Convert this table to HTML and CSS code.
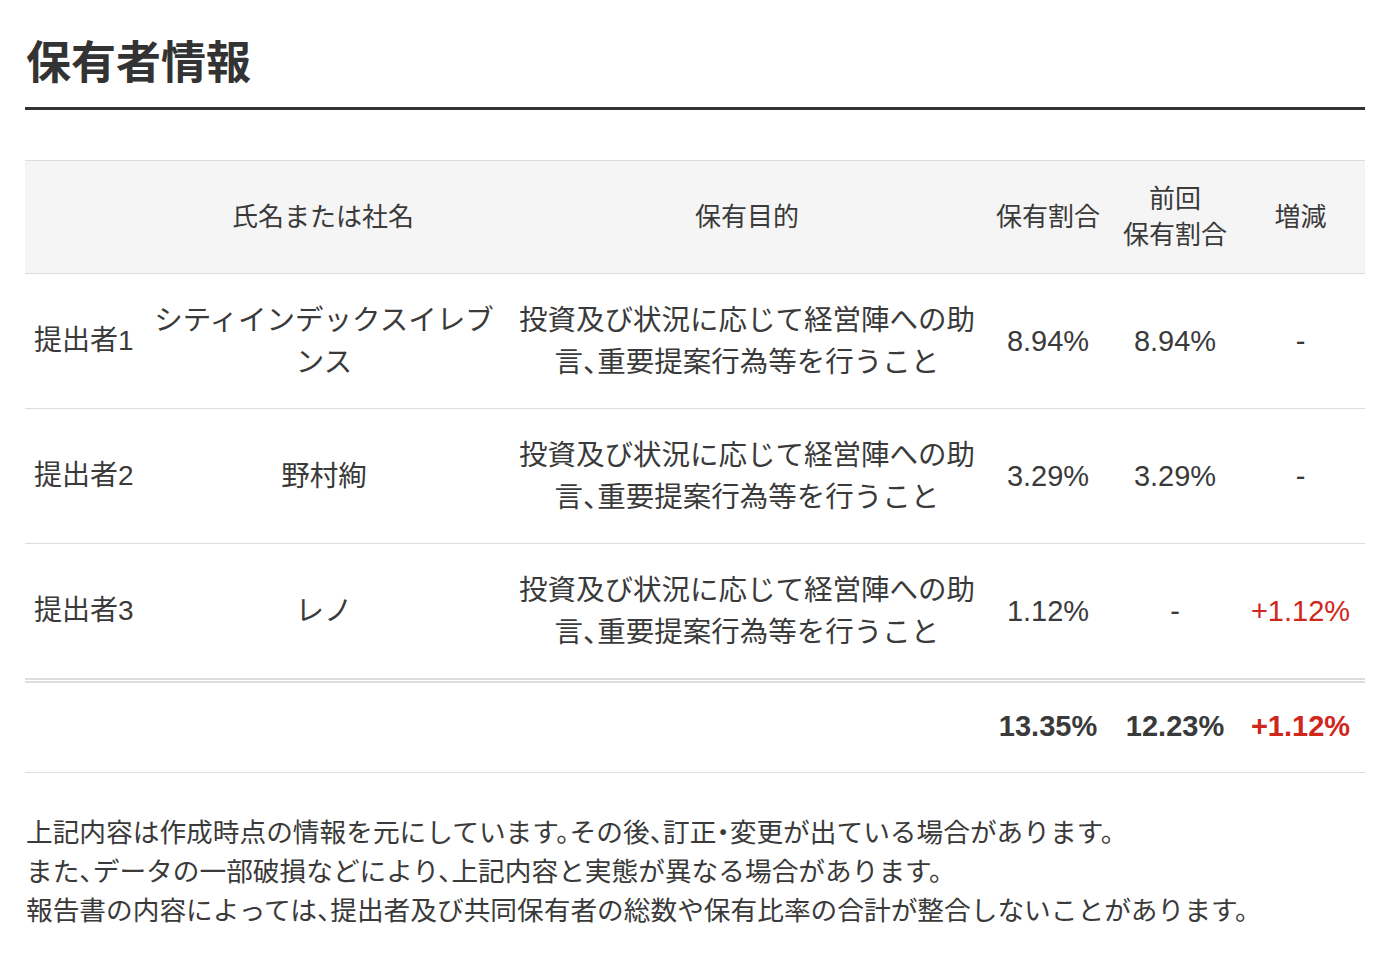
FILE: index.html
```html
<!DOCTYPE html>
<html lang="ja">
<head>
<meta charset="utf-8">
<title>保有者情報</title>
<link rel="stylesheet" href="styles.css">
</head>
<body>
<section class="holders">
  <h2 class="title">保有者情報</h2>
  <table class="table">
    <colgroup>
      <col class="c1"><col class="c2"><col class="c3"><col class="c4"><col class="c5"><col class="c6">
    </colgroup>
    <thead>
      <tr>
        <th></th>
        <th>氏名または社名</th>
        <th>保有目的</th>
        <th>保有割合</th>
        <th>前回<br>保有割合</th>
        <th>増減</th>
      </tr>
    </thead>
    <tbody>
      <tr>
        <td class="label">提出者1</td>
        <td class="name">シティインデックスイレブンス</td>
        <td class="purpose">投資及び状況に応じて経営陣への助言、重要提案行為等を行うこと</td>
        <td class="num">8.94%</td>
        <td class="num">8.94%</td>
        <td class="num">-</td>
      </tr>
      <tr>
        <td class="label">提出者2</td>
        <td class="name">野村絢</td>
        <td class="purpose">投資及び状況に応じて経営陣への助言、重要提案行為等を行うこと</td>
        <td class="num">3.29%</td>
        <td class="num">3.29%</td>
        <td class="num">-</td>
      </tr>
      <tr>
        <td class="label">提出者3</td>
        <td class="name">レノ</td>
        <td class="purpose">投資及び状況に応じて経営陣への助言、重要提案行為等を行うこと</td>
        <td class="num">1.12%</td>
        <td class="num">-</td>
        <td class="num up">+1.12%</td>
      </tr>
    </tbody>
    <tfoot>
      <tr>
        <td></td>
        <td></td>
        <td></td>
        <td class="num total">13.35%</td>
        <td class="num total">12.23%</td>
        <td class="num total up">+1.12%</td>
      </tr>
    </tfoot>
  </table>
  <div class="notes">
    <p>上記内容は作成時点の情報を元にしています。その後、訂正・変更が出ている場合があります。</p>
    <p>また、データの一部破損などにより、上記内容と実態が異なる場合があります。</p>
    <p>報告書の内容によっては、提出者及び共同保有者の総数や保有比率の合計が整合しないことがあります。</p>
  </div>
</section>
</body>
</html>
```

FILE: styles.css
```css
html, body {
  margin: 0;
  padding: 0;
  background: #fff;
}

body {
  font-family: "Liberation Sans", "Noto Sans CJK JP", sans-serif;
  font-feature-settings: "halt";
  color: #3a3a3a;
}

.holders {
  padding: 25px 28px 0 25px;
}

.title {
  margin: 0;
  font-family: "Noto Sans CJK JP", sans-serif;
  font-size: 45px;
  font-weight: 700;
  line-height: 64px;
  color: #333;
  padding: 3px 0 15px 1px;
  border-bottom: 3px solid #333;
}

.table {
  width: 1340px;
  margin-top: 50px;
  border-collapse: collapse;
  table-layout: fixed;
}

.c1 { width: 125px; }
.c2 { width: 352px; }
.c3 { width: 480px; }
.c4 { width: 132px; }
.c5 { width: 122px; }
.c6 { width: 129px; }

.table th {
  background: #f5f5f5;
  font-weight: 400;
  font-size: 26px;
  line-height: 36px;
  padding: 20px 4px;
  text-align: center;
  vertical-align: middle;
  border-top: 1px solid #ddd;
  border-bottom: 1px solid #ddd;
  color: #3a3a3a;
}

.table th:nth-child(2) {
  padding-left: 0;
  padding-right: 6px;
}

.table th:nth-child(3) {
  padding-left: 14px;
  padding-right: 4px;
}

.table td {
  font-size: 28.5px;
  line-height: 42px;
  padding: 25px 8px;
  text-align: center;
  vertical-align: middle;
  border-bottom: 1px solid #ddd;
}

.table td.name {
  padding-left: 2px;
  padding-right: 6px;
}

.table td.purpose {
  padding-left: 16px;
  padding-right: 6px;
}

.table td.label {
  font-size: 28px;
  text-align: left;
  padding-left: 9px;
  padding-right: 0;
}

.table td.num {
  font-size: 29px;
  padding-left: 2px;
  padding-right: 2px;
}

.table tfoot td {
  border-top: 5px double #ddd;
  padding-top: 22px;
  padding-bottom: 25px;
}

.table td.total {
  font-weight: 700;
}

.up {
  color: #d0271d;
}

.notes {
  margin-top: 38px;
  font-family: "Noto Sans CJK JP", sans-serif;
  font-size: 26.7px;
  line-height: 39px;
  color: #3a3a3a;
  padding-left: 1px;
}

.notes p {
  margin: 0;
}
```
